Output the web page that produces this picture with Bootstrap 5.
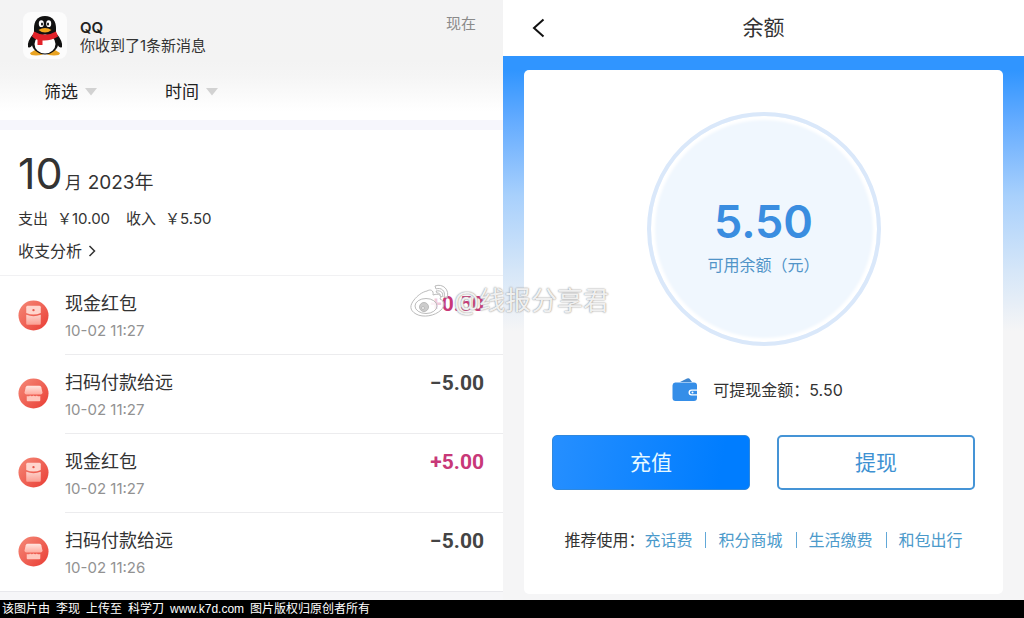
<!DOCTYPE html>
<html lang="zh-CN">
<head>
<meta charset="utf-8">
<meta name="viewport" content="width=device-width, initial-scale=1">
<title>余额</title>
<link href="https://cdn.jsdelivr.net/npm/bootstrap@5.3.0/dist/css/bootstrap.min.css" rel="stylesheet">
<style>
  body { font-family: Inter, "Noto Sans CJK SC", sans-serif; color: #333; background: #f6f6f7; font-size: 15px; line-height: 20px; }
  .screens { display: grid; grid-template-columns: 503fr 521fr; }

  /* bill list */
  .bills { background: #fff; }
  .notice { padding: 12px 27px 17px 23px; gap: 13px; background: linear-gradient(#f3f3f4, #f3f3f3 80%, #f5f5f5); }
  .notice-icon { width: 44px; height: 47px; border-radius: 8px; background: #fcfcfc; }
  .notice-title { font-weight: 600; line-height: 16px; color: #222; }
  .notice-text { line-height: 19px; }
  .notice-time { line-height: 24px; color: #8a8a8a; }
  .filters { padding: 4px 44px 16px; gap: 70px; background: linear-gradient(#f5f5f5, #fff 80%); border-bottom: 10px solid #f6f6fc; }
  .filter-btn { font-size: 17px; line-height: 24px; color: #222; gap: 7px; width: 51px; white-space: nowrap; }
  .summary { padding: 19px 18px 13px; }
  .month-num { font-size: 43px; line-height: 48px; }
  .month-unit { font-size: 17px; line-height: 24px; margin-left: 2px; }
  .year { font-size: 19px; line-height: 24px; margin-left: 6px; }
  .totals { margin-top: 12px; }
  .money { margin-left: 9px; }
  .analysis { color: #333; font-size: 16px; gap: 6px; }
  .entry { height: 79px; padding-left: 18px; gap: 16px; }
  .entry-body { border-top: 1px solid #ececee; padding: 16px 19px 0 0; }
  .entry:first-child { border-top: 1px solid #f1f1f3; }
  .entry:first-child .entry-body { border-top: 0; }
  .entry-name { font-size: 18px; line-height: 24px; }
  .entry-time { color: #929292; margin-top: 5px; }
  .amount { font-family: Roboto, sans-serif; font-size: 21px; line-height: 24px; font-weight: 700; color: #444; }
  .amount-in { color: #c83878; }
  .list-end { border-top: 1px solid #e8e8ec; min-height: 9px; background: #f6f6f8; }

  /* balance */
  .wallet-head { background: #fff; display: grid; grid-template-columns: 1fr auto 1fr; padding: 12px 28px; }
  .wallet-title { font-size: 21px; line-height: 32px; }
  .wallet-area { padding: 14px 21px 6px; background: linear-gradient(#3095ff 0, #3095ff 14px, #63abff 64px, #a8d0fc 140px, #d5e6f8 214px, #f5f5f6 275px); }
  .panel { background: #fff; border-radius: 5px; padding: 42px 28px 42px; }
  .ring { width: 234px; height: 234px; border: 4px solid #dae8fa; box-shadow: inset 0 0 3px 4px #fff; background: #f0f7fe; padding-top: 14px; }
  .ring-sum { font-size: 45px; line-height: 54px; font-weight: 600; color: #3a8de0; }
  .ring-label { font-size: 16px; line-height: 24px; color: #5194c8; margin-top: 4px; }
  .cashable { font-size: 16px; line-height: 24px; margin-top: 32px; gap: 15px; padding-right: 12px; }
  .actions { gap: 27px; margin-top: 33px; }
  .action { height: 55px; font-size: 21px; line-height: 24px; border-radius: 5px; border: 2px solid #4594d6; color: #3e91d2; }
  .action-main { background: linear-gradient(100deg, #268fff, #007dff 85%); border: 1px solid #3088dd; color: #e6f8ff; }
  .shortcuts { font-size: 16px; line-height: 24px; margin-top: 38px; }
  .shortcuts a { color: #4b9acb; }
  .shortcuts a + a { border-left: 1px solid #62a8d8; margin-left: 13px; padding-left: 12px; line-height: 16px; }

  .watermark { left: 410px; top: 282px; gap: 2px; font-size: 26px; line-height: 38px; color: #fffd; text-shadow: 0 0 2px #999, 0 0 1px #aaa; white-space: nowrap; pointer-events: none; }
  .credit { background: #000; color: #fff; font: 12px/18px "Liberation Sans", "Noto Sans CJK SC", sans-serif; padding-left: 2px; gap: 6px; }
</style>
</head>
<body>
<svg class="position-absolute" width="0" height="0" aria-hidden="true">
  <defs>
    <linearGradient id="coral" x1="0" y1="0" x2="1" y2="1"><stop stop-color="#f58a78"/><stop offset="1" stop-color="#e93c34"/></linearGradient>
    <linearGradient id="blush" x1="0" y1="0" x2="0" y2="1"><stop stop-color="#ffe6e0"/><stop offset="1" stop-color="#ffab9f"/></linearGradient>
  </defs>
  <symbol id="packet" viewBox="0 0 32 32">
    <circle cx="16" cy="16" r="15.5" fill="url(#coral)"/>
    <path d="M8.500 15.200Q16 18.200 23.500 15.200V24.500a1 1 0 0 1-1 1h-13a1 1 0 0 1-1-1z" fill="url(#blush)" opacity=".85"/>
    <path d="M8.500 7.500a1.500 1.500 0 0 1 1.500-1.500h12a1.500 1.500 0 0 1 1.500 1.500v5.800Q16 16.800 8.500 13.300z" fill="#ffd5cd"/>
    <circle cx="16" cy="10.500" r="1.200" fill="#e8564b"/>
  </symbol>
  <symbol id="shop" viewBox="0 0 32 32">
    <circle cx="16" cy="16" r="15.500" fill="url(#coral)"/>
    <path d="M10 8h12q1.500 0 2 1.500l1.300 5.500a2 2 0 0 1-2 2H8.700a2 2 0 0 1-2-2L8 9.500Q8.500 8 10 8z" fill="url(#blush)"/>
    <path d="M9 18.500q2 1 3.500-.5 1.800 1.500 3.500 0 1.800 1.500 3.500 0 1.500 1.500 3.500.5V23a1 1 0 0 1-1 1H10a1 1 0 0 1-1-1z" fill="#ffc6bc"/>
  </symbol>
</svg>

<div class="position-relative">
  <main class="screens">
    <section class="bills d-flex flex-column">
      <div class="notice d-flex align-items-start">
        <div class="notice-icon d-flex justify-content-center align-items-center">
          <svg width="38" height="42" viewBox="0 0 38 42" aria-label="QQ">
            <path d="M9 35l-5 3q0 2.500 6 2.500t9-2.500q3 2.500 9 2.500t6-2.500l-5-3z" fill="#e9a321"/>
            <path d="M8 18Q1 26 2 32q2 2 5-3M30 18q7 8 6 14-2 2-5-3" fill="#111"/>
            <ellipse cx="19" cy="27" rx="13.500" ry="12.500" fill="#111"/>
            <path d="M19 1C11 1 8 7 8 13v7h22v-7C30 7 27 1 19 1z" fill="#111"/>
            <ellipse cx="19" cy="29" rx="10.500" ry="9.500" fill="#fff"/>
            <ellipse cx="15.300" cy="8.700" rx="2.500" ry="3.400" fill="#fff"/><ellipse cx="22.700" cy="8.700" rx="2.500" ry="3.400" fill="#fff"/>
            <ellipse cx="16" cy="9" rx="1" ry="1.500" fill="#111"/><ellipse cx="22" cy="9" rx="1" ry="1.500" fill="#111"/>
            <path d="M12.500 15q6.500-4 13 0-6.500 5-13 0z" fill="#f2a51c"/>
            <path d="M8 16.500q11 6.500 22 0l2 5q-7 4.500-15.500 4V30h-5v-5.200Q8.500 24 6 21.500z" fill="#e22229"/>
          </svg>
        </div>
        <div class="mt-2 flex-grow-1 text-nowrap">
          <div class="notice-title">QQ</div>
          <div class="notice-text">你收到了1条新消息</div>
        </div>
        <div class="notice-time">现在</div>
      </div>

      <div class="filters d-flex">
        <button type="button" class="filter-btn btn p-0 border-0 d-flex align-items-center">筛选<svg class="flex-shrink-0" width="12" height="8" viewBox="0 0 12 8" aria-hidden="true"><path d="M0 0h12L6 7.500z" fill="#d2d2d2"/></svg></button>
        <button type="button" class="filter-btn btn p-0 border-0 d-flex align-items-center">时间<svg class="flex-shrink-0" width="12" height="8" viewBox="0 0 12 8" aria-hidden="true"><path d="M0 0h12L6 7.500z" fill="#d2d2d2"/></svg></button>
      </div>

      <div class="summary">
        <div class="d-flex align-items-baseline">
          <span class="month-num">10</span><span class="month-unit">月</span><span class="year">2023年</span>
        </div>
        <div class="totals d-flex">
          <span>支出</span><span class="money">￥10.00</span><span class="ms-3">收入</span><span class="money">￥5.50</span>
        </div>
        <a href="#" class="analysis d-inline-flex align-items-center text-decoration-none mt-2 pt-1">收支分析<svg width="8" height="12" viewBox="0 0 8 12" fill="none" stroke="#333" stroke-width="1.500" aria-hidden="true"><path d="M1.500 1l5 5-5 5"/></svg></a>
      </div>

      <div>
        <div class="entry d-flex">
          <svg class="align-self-center flex-shrink-0" width="31" height="31"><use href="#packet"/></svg>
          <div class="entry-body d-flex justify-content-between flex-grow-1">
            <div><div class="entry-name">现金红包</div><div class="entry-time">10-02 11:27</div></div>
            <div class="amount amount-in">+0.50</div>
          </div>
        </div>
        <div class="entry d-flex">
          <svg class="align-self-center flex-shrink-0" width="31" height="31"><use href="#shop"/></svg>
          <div class="entry-body d-flex justify-content-between flex-grow-1">
            <div><div class="entry-name">扫码付款给远</div><div class="entry-time">10-02 11:27</div></div>
            <div class="amount">−5.00</div>
          </div>
        </div>
        <div class="entry d-flex">
          <svg class="align-self-center flex-shrink-0" width="31" height="31"><use href="#packet"/></svg>
          <div class="entry-body d-flex justify-content-between flex-grow-1">
            <div><div class="entry-name">现金红包</div><div class="entry-time">10-02 11:27</div></div>
            <div class="amount amount-in">+5.00</div>
          </div>
        </div>
        <div class="entry d-flex">
          <svg class="align-self-center flex-shrink-0" width="31" height="31"><use href="#shop"/></svg>
          <div class="entry-body d-flex justify-content-between flex-grow-1">
            <div><div class="entry-name">扫码付款给远</div><div class="entry-time">10-02 11:26</div></div>
            <div class="amount">−5.00</div>
          </div>
        </div>
      </div>
      <div class="list-end flex-grow-1"></div>
    </section>

    <section class="d-flex flex-column">
      <header class="wallet-head">
        <button type="button" class="btn p-0 border-0 d-flex align-items-center" aria-label="返回">
          <svg width="14" height="20" viewBox="0 0 14 20" fill="none" stroke="#111" stroke-width="2"><path d="M12.500 1.500L3 10l9.500 8.500"/></svg>
        </button>
        <h1 class="wallet-title fw-normal m-0">余额</h1>
      </header>
      <div class="wallet-area flex-grow-1">
        <div class="panel">
          <div class="ring rounded-circle mx-auto d-flex flex-column align-items-center justify-content-center">
            <div class="ring-sum">5.50</div>
            <div class="ring-label">可用余额（元）</div>
          </div>
          <div class="cashable d-flex justify-content-center align-items-center">
            <svg width="26" height="24" viewBox="0 0 26 24" aria-hidden="true">
              <path d="M8 4l7-3.500q2-.8 3 .8L20 4z" fill="#3d85cf"/>
              <path d="M3 4.500h19a3 3 0 0 1 3 3v4h-5.500a3 3 0 0 0 0 6H25V20a3 3 0 0 1-3 3H3.500a3 3 0 0 1-3-3V7.500a3 3 0 0 1 2.500-3z" fill="#358ee8"/>
              <path d="M19.700 12.700H25v3.600h-5.300a1.800 1.800 0 0 1 0-3.600z" fill="#358ee8"/><circle cx="20.500" cy="14.500" r="1" fill="#fff"/>
            </svg>
            <span>可提现金额：5.50</span>
          </div>
          <div class="actions d-flex">
            <button type="button" class="action action-main btn flex-fill w-50">充值</button>
            <button type="button" class="action btn flex-fill w-50">提现</button>
          </div>
          <div class="shortcuts d-flex justify-content-center align-items-center text-nowrap">
            <span>推荐使用：</span><a href="#" class="text-decoration-none">充话费</a><a href="#" class="text-decoration-none">积分商城</a><a href="#" class="text-decoration-none">生活缴费</a><a href="#" class="text-decoration-none">和包出行</a>
          </div>
        </div>
      </div>
    </section>
  </main>

  <div class="watermark position-absolute d-flex align-items-center">
    <svg width="42" height="36" viewBox="0 0 42 36" fill="#fffb" stroke="#bbb" stroke-width="1" aria-hidden="true">
      <path d="M17 8c3-2 7-1 6 4 6-2 9 0 7 4 5 2 5 7 1 11-6 6-18 8-25 4S0 22 4 17C7 13 12 9 17 8z"/>
      <ellipse cx="16" cy="23" rx="11" ry="7.500"/><circle cx="14" cy="24" r="4.500" fill="#ccc"/><circle cx="13" cy="25" r="1.500"/>
      <path d="M25 3c8-3 15 4 12 12l-3-1c2-6-3-10-8-8zM26 8c5-1 8 2 6 6l-2-1c1-2-1-3-3-3z"/>
    </svg>
    <span>@线报分享君</span>
  </div>
</div>
<footer class="credit d-flex"><span>该图片由</span><span>李现</span><span>上传至</span><span>科学刀</span><span>www.k7d.com</span><span>图片版权归原创者所有</span></footer>
<script src="https://cdn.jsdelivr.net/npm/bootstrap@5.3.0/dist/js/bootstrap.bundle.min.js"></script>
</body>
</html>
